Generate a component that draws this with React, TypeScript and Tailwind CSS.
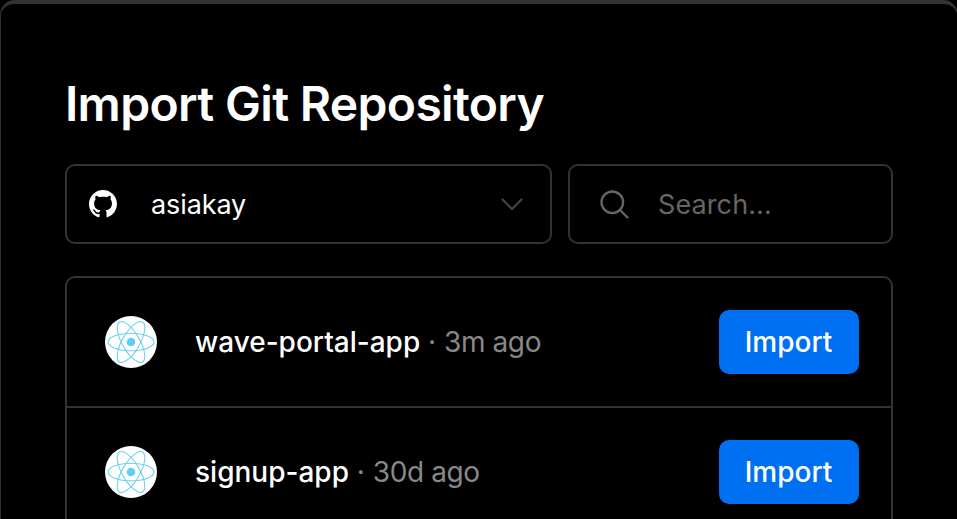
import React from "react";

const repositories = [
  { name: "wave-portal-app", age: "3m ago" },
  { name: "signup-app", age: "30d ago" },
];

function GitHubMark() {
  return (
    <svg className="size-7 shrink-0" viewBox="0 0 16 16" fill="white" aria-hidden="true">
      <path
        fillRule="evenodd"
        d="M8 0C3.58 0 0 3.58 0 8c0 3.54 2.29 6.53 5.47 7.59.4.07.55-.17.55-.38 0-.19-.01-.82-.01-1.49-2.01.37-2.53-.49-2.69-.94-.09-.23-.48-.94-.82-1.13-.28-.15-.68-.52-.01-.53.63-.01 1.08.58 1.23.82.72 1.21 1.87.87 2.33.66.07-.52.28-.87.51-1.07-1.78-.2-3.64-.89-3.64-3.95 0-.87.31-1.59.82-2.15-.08-.2-.36-1.02.08-2.12 0 0 .67-.21 2.2.82.64-.18 1.32-.27 2-.27s1.36.09 2 .27c1.53-1.04 2.2-.82 2.2-.82.44 1.1.16 1.92.08 2.12.51.56.82 1.27.82 2.15 0 3.07-1.87 3.75-3.65 3.95.29.25.54.73.54 1.48 0 1.07-.01 1.93-.01 2.2 0 .21.15.46.55.38A8.01 8.01 0 0 0 16 8c0-4.42-3.58-8-8-8z"
      />
    </svg>
  );
}

function ReactLogo() {
  return (
    <svg className="size-[52px] shrink-0 rounded-full bg-white" viewBox="-26 -26 52 52" aria-hidden="true">
      <circle r="4.3" fill="#61cdf0" />
      <g fill="none" stroke="#6fd0ee" strokeWidth="1.1">
        <ellipse rx="23" ry="8.8" />
        <ellipse rx="23" ry="8.8" transform="rotate(60)" />
        <ellipse rx="23" ry="8.8" transform="rotate(120)" />
      </g>
    </svg>
  );
}

export default function App() {
  return (
    <div className="h-[519px] w-[957px] overflow-hidden bg-black font-['Inter',sans-serif]">
      <main className="h-[560px] w-[958px] rounded-[15px] border border-t-4 border-[#333] px-16 pt-[70px]">
        <h1 className="h-[60px] text-[48px] leading-[59px] font-semibold tracking-[-0.67px] whitespace-nowrap text-white">
          Import Git Repository
        </h1>
        <div className="mt-[30px] flex gap-4">
          <button className="flex h-20 w-[487px] items-center rounded-[10px] border-2 border-[#333] pr-[22px] pl-[22px] text-left">
            <GitHubMark />
            <span className="ml-[34px] flex-1 pt-px text-[27px] leading-[33px] tracking-[-0.1px] text-white">asiakay</span>
            <svg className="size-8" viewBox="0 0 32 32" fill="none" stroke="#444" strokeWidth="2.2" strokeLinecap="round" strokeLinejoin="round" aria-hidden="true">
              <path d="M6.5 11.5 16 21l9.5-9.5" />
            </svg>
          </button>
          <div className="flex h-20 w-[325px] items-center rounded-[10px] border-2 border-[#333] pl-7">
            <svg className="size-8 shrink-0" viewBox="0 0 32 32" fill="none" stroke="#666" strokeWidth="2.3" strokeLinecap="round" aria-hidden="true">
              <circle cx="14.3" cy="14.3" r="10.8" />
              <path d="m22 22 7.5 7.5" />
            </svg>
            <span className="ml-7 pt-px text-[27px] leading-[33px] tracking-[0.1px] text-[#666]">Search...</span>
          </div>
        </div>
        <ul className="mt-8 h-[300px] w-[828px] rounded-[10px] border-2 border-[#333]">
          {repositories.map((repo) => (
            <li key={repo.name} className="flex h-[130px] items-center border-b-2 border-[#333] pr-8 pl-[38px]">
              <ReactLogo />
              <p className="ml-[38px] flex-1 text-[28px] leading-10 whitespace-nowrap text-[#888]">
                <span className="font-medium text-white">{repo.name}</span> ·{" "}
                <span className="tracking-[-0.4px]">{repo.age}</span>
              </p>
              <button className="h-16 w-[140px] rounded-[10px] bg-[#0070f3] pr-px text-[28px] leading-10 font-medium text-white">
                Import
              </button>
            </li>
          ))}
        </ul>
      </main>
    </div>
  );
}
